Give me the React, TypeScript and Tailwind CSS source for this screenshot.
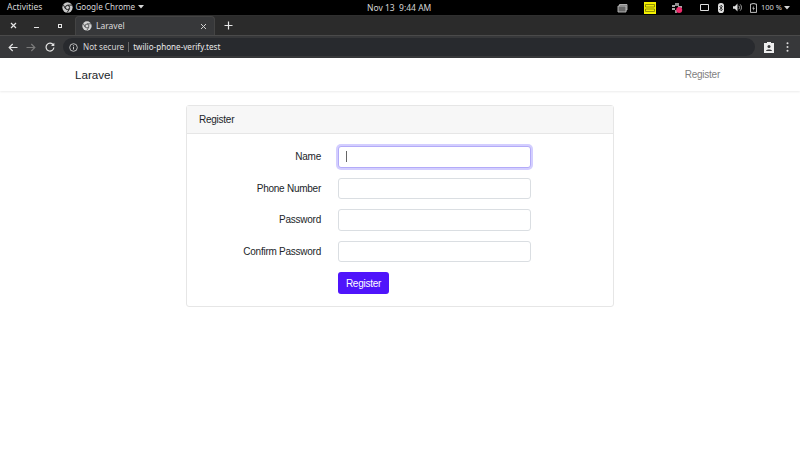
import React from "react";

const ubuntu = { fontFamily: '"Noto Sans", "Open Sans", sans-serif' };

function Globe({ size = 11, fg = "#cfcfcf", bg = "#3a3a3a" }: { size?: number; fg?: string; bg?: string }) {
  return (
    <svg width={size} height={size} viewBox="0 0 12 12" className="shrink-0">
      <circle cx="6" cy="6" r="5.600" fill={fg} />
      <path d="M6 3.400h5M3.800 7.400 1.400 3M8.200 7.400 5.600 11.500" stroke={bg} strokeWidth="0.900" fill="none" />
      <circle cx="6" cy="6" r="2.300" fill={fg} stroke={bg} strokeWidth="0.900" />
    </svg>
  );
}

function Field({ label, focused }: { label: string; focused?: boolean }) {
  return (
    <div className="flex items-center h-[21.6px] mb-[10px]">
      <label className="w-[134px] text-right text-[10px] tracking-[-0.25px] text-[#212529] shrink-0">{label}</label>
      <div
        className={
          focused
            ? "ml-[17px] w-[193px] h-[21.6px] bg-white rounded-[3px] border border-[#b3abf8] shadow-[0_0_0_2px_#d3ceff] flex items-center pl-[7px]"
            : "ml-[17px] w-[193px] h-[21.6px] bg-white rounded-[3px] border border-[#dadee2]"
        }
      >
        {focused && <div className="w-px h-[11px] bg-[#666]" />}
      </div>
    </div>
  );
}

export default function App() {
  return (
    <div className="w-[800px] h-[449px] bg-white overflow-hidden flex flex-col" style={{ fontFamily: '"Liberation Sans", Arial, sans-serif' }}>
      {/* GNOME top bar */}
      <div className="h-[15px] bg-black text-[#d6d6d6] text-[8.5px] flex items-center relative shrink-0" style={ubuntu}>
        <span className="ml-[7px]">Activities</span>
        <span className="ml-[20px] flex items-center text-[8.100px]">
          <Globe size={11} fg="#c8c8c8" bg="#000" />
          <span className="ml-[2px]">Google Chrome</span>
          <svg width="6" height="4" viewBox="0 0 6 4" className="ml-[3px]"><path d="M0 0h6L3 3.500z" fill="#d6d6d6" /></svg>
        </span>
        <span className="absolute left-[367px] top-0 leading-[15px] whitespace-nowrap">Nov 13&nbsp;&nbsp;9:44 AM</span>
        <div className="ml-auto flex items-center h-full">
          <svg width="11" height="10" viewBox="0 0 11 10" className="mr-[16px]">
            <path d="M1 3h8v6H1zM2.500 3V1.500h7.500V7H9" stroke="#bbb" strokeWidth="0.900" fill="#666" />
          </svg>
          <svg width="12" height="12" viewBox="0 0 12 12" className="mr-[15px]">
            <rect width="12" height="12" fill="#f4f000" />
            <path d="M1.500 2.500h9V5h-9zM1.500 7h9v2.500h-9z" stroke="#77770a" strokeWidth="0.800" fill="none" />
          </svg>
          <svg width="12" height="12" viewBox="0 0 12 12" className="mr-[17px]">
            <path d="M1 4h3M5 1v3M7 1v3M7 5h4M1 7h3M5 8v3" stroke="#ddd" strokeWidth="1.300" fill="none" />
            <circle cx="8.200" cy="8" r="3" fill="#ee2a6b" />
          </svg>
          <svg width="9" height="8" viewBox="0 0 9 8" className="mr-[9px]">
            <path d="M.5.5h8v6h-8z" stroke="#ddd" fill="none" />
          </svg>
          <svg width="6" height="10" viewBox="0 0 6 10" className="mr-[9px]">
            <rect width="6" height="10" rx="2.800" fill="#ddd" />
            <path d="M1.300 3 4.500 6.500 3 8V2l1.500 1.500L1.300 7" stroke="#000" strokeWidth="0.600" fill="none" />
          </svg>
          <svg width="9" height="9" viewBox="0 0 10 9" className="mr-[8px]">
            <path d="M0 3h2l3-3v9L2 6H0z" fill="#ddd" />
            <path d="M6.500 2.500a3 3 0 0 1 0 4M8 1a5 5 0 0 1 0 7" stroke="#ddd" strokeWidth="0.800" fill="none" />
          </svg>
          <svg width="7" height="10" viewBox="0 0 8 11" className="mr-[4px]">
            <path d="M2.500 1V.5h3V1h2v9.500H.5V1z" stroke="#ddd" fill="none" />
            <path d="M4.500 3 2.500 6H4l-.5 2.500 2-3H4z" fill="#ddd" />
          </svg>
          <span className="text-[7.500px] whitespace-nowrap w-[22px]">100 %</span>
          <svg width="6" height="4" viewBox="0 0 6 4" className="ml-[1px] mr-[10px]"><path d="M0 0h6L3 3.500z" fill="#d6d6d6" /></svg>
        </div>
      </div>

      {/* Tab strip */}
      <div className="h-[20px] bg-[#2b2b2b] flex items-end shrink-0 border-t border-[#2f2f2f]">
        <div className="w-[75px] h-full flex items-center text-[#e6e6e6] relative">
          <svg width="7" height="7" viewBox="0 0 7 7" className="ml-[10px]"><path d="M1 1l5 5M6 1 1 6" stroke="#e6e6e6" strokeWidth="1.200" /></svg>
          <div className="ml-[17px] w-[5px] h-px bg-[#e6e6e6] mt-[4px]" />
          <div className="ml-[19px] w-[4px] h-[4px] border border-[#e6e6e6]" />
        </div>
        <div className="w-[140px] h-[19px] bg-[#37383a] rounded-t-[4px] border-t border-x border-[#444] flex items-center text-[#dcdcdc] text-[8.500px] pl-[6px] pr-[5px]" style={ubuntu}>
          <Globe size={10} fg="#d5d5d5" bg="#37383a" />
          <span className="ml-[4px] mt-px">Laravel</span>
          <svg width="7" height="7" viewBox="0 0 7 7" className="ml-auto mr-[2px]"><path d="M1 1l5 5M6 1 1 6" stroke="#d0d0d0" strokeWidth="1" /></svg>
        </div>
        <svg width="9" height="9" viewBox="0 0 9 9" className="ml-[9px] mb-[5px]"><path d="M4.500 .5v8M.5 4.500h8" stroke="#e6e6e6" strokeWidth="1.200" /></svg>
      </div>

      {/* Toolbar */}
      <div className="h-[23px] bg-[#37383a] border-t border-[#4a4a4a] flex items-center shrink-0">
        <svg width="10" height="9" viewBox="0 0 10 9" className="ml-[8px]"><path d="M9.500 4.500H1.200M4.700 1 1.200 4.500 4.700 8" stroke="#e4e4e4" strokeWidth="1.200" fill="none" /></svg>
        <svg width="10" height="9" viewBox="0 0 10 9" className="ml-[8px]"><path d="M.5 4.500h8.300M5.300 1l3.500 3.500L5.300 8" stroke="#7b7b7b" strokeWidth="1.200" fill="none" /></svg>
        <svg width="10" height="10" viewBox="0 0 10 10" className="ml-[9px]"><path d="M8.300 3A3.900 3.900 0 1 0 8.900 5.500" stroke="#e4e4e4" strokeWidth="1.200" fill="none" /><path d="M9.300.8v3.300H6z" fill="#e4e4e4" /></svg>
        <div className="ml-[8px] w-[692px] h-[18px] bg-[#282a2e] rounded-full flex items-center text-[8.100px] pl-[6px]" style={ubuntu}>
          <svg width="9" height="9" viewBox="0 0 9 9"><circle cx="4.500" cy="4.500" r="3.800" stroke="#ddd" strokeWidth="0.800" fill="none" /><path d="M4.500 4v2.500M4.500 2.300v1" stroke="#ddd" strokeWidth="0.900" /></svg>
          <span className="ml-[5px] text-[#d8d8d8]">Not secure</span>
          <span className="mx-[4px] w-px h-[10px] bg-[#666]" />
          <span className="text-[#e8e8e8]">twilio-phone-verify.test</span>
        </div>
        <svg width="10" height="11" viewBox="0 0 10 11" className="ml-[9px]">
          <path d="M0 1h3V0h4v1h3v10H0z" fill="#eee" />
          <circle cx="5" cy="4.500" r="1.500" fill="#37383a" />
          <path d="M2 9c0-2 6-2 6 0z" fill="#37383a" />
        </svg>
        <svg width="3" height="10" viewBox="0 0 3 10" className="ml-[12px]">
          <circle cx="1.500" cy="1.200" r="1" fill="#ddd" /><circle cx="1.500" cy="5" r="1" fill="#ddd" /><circle cx="1.500" cy="8.800" r="1" fill="#ddd" />
        </svg>
      </div>

      {/* Laravel navbar */}
      <div className="h-[33px] bg-white shadow-[0_1px_2px_rgba(0,0,0,0.08)] flex items-center justify-between pl-[75px] pr-[80px] shrink-0">
        <span className="text-[11.600px] text-[#212529]">Laravel</span>
        <span className="text-[10px] tracking-[-0.25px] text-[#7f7f7f]">Register</span>
      </div>

      {/* Card */}
      <div className="flex justify-center pt-[14px]">
        <div className="w-[428px] h-[202px] border border-[#e6e6e6] rounded-[3px] flex flex-col">
          <div className="h-[28px] bg-[#f7f7f7] border-b border-[#e6e6e6] flex items-center pl-[12px] text-[10px] tracking-[-0.25px] text-[#212529] shrink-0">
            Register
          </div>
          <div className="pt-[12px]">
            <Field label="Name" focused />
            <Field label="Phone Number" />
            <Field label="Password" />
            <Field label="Confirm Password" />
            <button className="block ml-[151px] w-[51px] h-[22px] bg-[#4f14fb] text-white text-[10px] tracking-[-0.25px] rounded-[3px]">
              Register
            </button>
          </div>
        </div>
      </div>
    </div>
  );
}
